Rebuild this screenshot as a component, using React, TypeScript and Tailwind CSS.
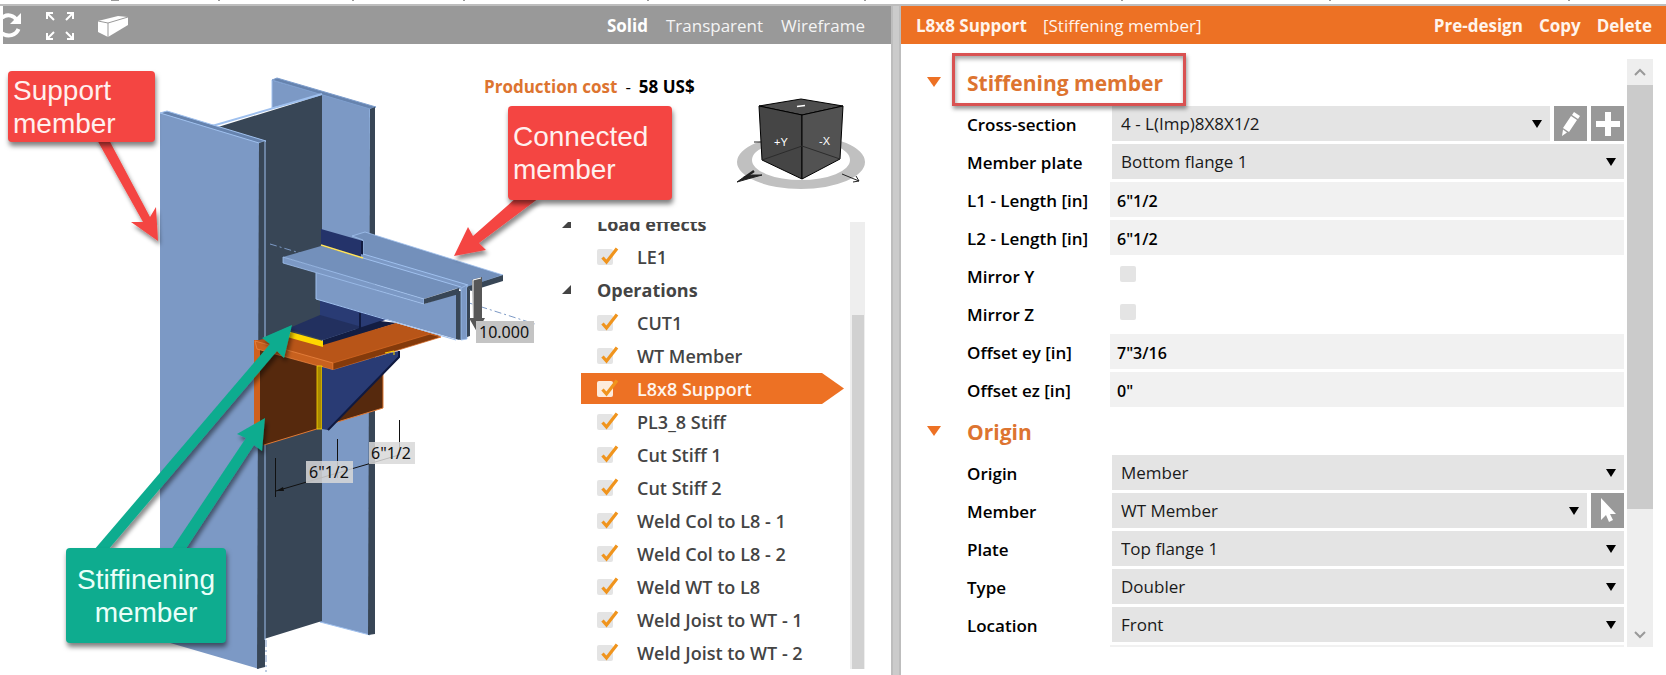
import { useState } from 'react';
import type { ReactNode } from 'react';

const VIEW_MODES = ['Solid', 'Transparent', 'Wireframe'];

const OPERATIONS = [
  'CUT1',
  'WT Member',
  'L8x8 Support',
  'PL3_8 Stiff',
  'Cut Stiff 1',
  'Cut Stiff 2',
  'Weld Col to L8 - 1',
  'Weld Col to L8 - 2',
  'Weld WT to L8',
  'Weld Joist to WT - 1',
  'Weld Joist to WT - 2',
];

function RotateIcon() {
  return (
    <svg width="20" height="28" viewBox="0 0 20 28" fill="none" aria-hidden="true">
      <path d="M-1 5.5C5 1.500 11 3.500 14 8.500M15.500 17C13 23.500 5 25.500 -1 21.500" stroke="#fff" strokeWidth="4" />
      <path d="M18 1v11H7z" fill="#fff" />
    </svg>
  );
}

function ExpandIcon() {
  return (
    <svg width="30" height="30" viewBox="0 0 30 30" fill="none" stroke="#fff" strokeWidth="2" aria-hidden="true">
      <path d="M2 8V2h6M2 2l7 7M22 2h6v6M28 2l-7 7M2 22v6h6M2 28l7-7M28 22v6h-6M28 28l-7-7" />
    </svg>
  );
}

function BeamIcon() {
  return (
    <svg width="30" height="21" viewBox="0 0 30 21" aria-hidden="true">
      <path d="M0 5 20 0l10 1v8L10 21 0 16z" fill="#fff" />
      <path d="M0 5l10 2 20-6M10 7v14" stroke="#999" fill="none" />
    </svg>
  );
}

function Caret() {
  return (
    <svg className="pointer-events-none absolute top-1/2 right-2 -translate-y-1/2" width="10" height="8" viewBox="0 0 10 8" aria-hidden="true">
      <path d="M0 0h10L5 8z" />
    </svg>
  );
}

function Tick() {
  return (
    <svg className="pointer-events-none absolute -top-0.5 left-1" width="18" height="18" viewBox="0 0 18 18" fill="none" aria-hidden="true">
      <path d="M1.500 10.500 5.500 15 16 1.500" stroke="#f0941d" strokeWidth="3.200" />
    </svg>
  );
}

function Scene() {
  return (
    <svg className="absolute top-0 left-0" width="557" height="631" viewBox="3 44 557 631" role="img" aria-label="Steel connection model">
      <defs>
        <filter id="arrow-shadow" x="-20%" y="-20%" width="140%" height="140%">
          <feDropShadow dx="2" dy="4" stdDeviation="2" floodOpacity="0.45" />
        </filter>
      </defs>

      {/* column */}
      <g strokeWidth="1">
        <path d="M272 80 370 108V635L320 622V96L272 108z" fill="#7c99c5" stroke="#9fc0ee" />
        <path d="M272 80 277 78 376 107 370 109z" fill="#6683ae" stroke="#7f9fce" />
        <path d="M370 109 375 107V634L368 635z" fill="#384656" />
        <path d="M218 127 322 95V621L264 639V141z" fill="#384656" />
        <path d="M212 126 322 94" stroke="#9fc0ee" strokeWidth="2" />
        <path d="M160 113 259 142V669L160 640z" fill="#7c99c5" />
        <path d="M160 113 167 111 266 141 259 143z" fill="#6683ae" stroke="#9fc0ee" />
        <path d="M259 143 265 141V667L257 669z" fill="#384656" />
        <path d="M265 141V640" stroke="#9fc0ee" />
      </g>
      <path d="M270 244 300 253M466 302 535 324M266 640V672" stroke="#7c99c5" strokeDasharray="7 3 2 3" />

      {/* plates under the flange */}
      <path d="M320 300 390 318 361 330 320 317z" fill="#293b74" />
      <path d="M287 329 320 315 362 327 323 340z" fill="#22305f" />
      <path d="M323 340 380 321 397 323 323 346z" fill="#131d42" />

      {/* angle support */}
      <path d="M260 349 320 364V428L264 445 260 443z" fill="#56290d" />
      <path d="M264 445 320 428" stroke="#e07a35" />
      <path d="M383 370V408L334 423z" fill="#56290d" stroke="#e07a35" />
      <path d="M254 340H260V424H254z" fill="#d0601c" />
      <path d="M255 341 289 333 323 345 396 323 441 336 333 364z" fill="#b85518" />
      <path d="M255 341 333 363V370L257 349z" fill="#c8611f" stroke="#f08a45" strokeWidth="0.700" />
      <path d="M333 363 430 334 441 337 333 370z" fill="#843a0b" stroke="#d86a24" strokeWidth="0.700" />
      <path d="M317 366H322V429H317z" fill="#a98a00" stroke="#ffd800" strokeWidth="0.800" />
      <path d="M322 367 333 370 390 353 399 351V357L328 430 322 429z" fill="#293b74" />
      <path d="M399 351V357L328 430" stroke="#0f1940" strokeWidth="2" fill="none" />
      <path d="M385 353 394 351V355" stroke="#ffd800" fill="none" />
      <path d="M287 331 323 341V347L287 337z" fill="#ffd800" />

      {/* connected beam */}
      <path d="M321 229 363 241V259L321 246z" fill="#24336a" />
      <path d="M352 236 365 232 503 275 468 287 363 256V240z" fill="#7390bb" stroke="#9fc0ee" strokeWidth="0.800" />
      <path d="M362 241V258" stroke="#111b40" strokeWidth="2" />
      <path d="M503 275V281L471 291 466 287z" fill="#384656" />
      <path d="M361 254 470 285 462 290 361 262z" fill="#7c99c5" />
      <path d="M283 257 321 246 461 287 424 299z" fill="#7390bb" />
      <path d="M363 254 468 285M363 258 461 287" stroke="#9fc0ee" />
      <path d="M316 272 424 304 459 292V340L316 299z" fill="#7c99c5" />
      <path d="M283 257 424 299V304L283 263z" fill="#7c99c5" stroke="#9fc0ee" strokeWidth="0.800" />
      <path d="M424 299 459 288V294L424 304z" fill="#384656" />
      <path d="M456 291H461V340L456 339z" fill="#384656" />
      <path d="M461 288 467 285V339L461 340z" fill="#7c99c5" stroke="#9fc0ee" strokeWidth="0.800" />
      <path d="M467 287 470 290V336L467 337z" fill="#384656" />
      <path d="M321 245 363 258" stroke="#ffe45c" strokeWidth="1.500" />
      <path d="M316 273V299L456 340" stroke="#9fc0ee" fill="none" />
      <path d="M360 313V329" stroke="#111b40" strokeWidth="2" />

      {/* load arrow */}
      <path d="M472 280 482 277V318H485L477 332 469 318H473z" fill="#575757" />
      <path d="M473 318V280L481 278" stroke="#fff" fill="none" />

      {/* dimensions */}
      <path d="M275.500 458V497M337.500 439V478M399.500 420V455M276 491 399 455" stroke="#111" />
      <path d="M276 491 283 487 284 491z" fill="#111" />
      <g fill="#d8d8d8" fillOpacity="0.850">
        <path d="M476 321H534V343H476z" fill="#c4c4c4" fillOpacity="1" />
        <path d="M306 461H353V483H306z" />
        <path d="M369 442H415V464H369z" />
      </g>
      <g className="font-['Noto_Sans',sans-serif] text-base" fill="#111">
        <text x="479" y="338">10.000</text>
        <text x="309" y="478">6"1/2</text>
        <text x="371" y="459">6"1/2</text>
      </g>

      {/* callout pointers */}
      <g filter="url(#arrow-shadow)">
        <path d="M96 138H108L150 217 156 207 158 241 131 222 143 222z" fill="#f44542" />
        <path d="M516 198H539L479 243 486 250 454 256 468 227 473 236z" fill="#f44542" />
        <path d="M94 550H108L277 351 284 358 292 325 262 338 270 344z" fill="#0eac8f" />
        <path d="M171 550H185L254 445 262 451 265 418 237 434 246 438z" fill="#0eac8f" />
      </g>
    </svg>
  );
}

function Callout({ className, children }: { className: string; children: ReactNode }) {
  return (
    <div className={`absolute flex items-center rounded-sm px-[5px] font-['Liberation_Sans',sans-serif] text-[28px] leading-[33px] shadow-[1px_4px_5px_rgba(0,0,0,0.5)] ${className}`}>
      {children}
    </div>
  );
}

function ViewCube() {
  return (
    <svg width="134" height="98" viewBox="734 96 134 98" role="img" aria-label="View cube">
      <path d="M737 162a64 27 0 1 0 128 0a64 27 0 1 0-128 0zM752 160a49 20 0 1 1 98 0a49 20 0 1 1-98 0z" fill="#c0c0c0" fillRule="evenodd" />
      <g stroke="#000" strokeLinejoin="round">
        <path d="M759 106 801 99 843 106 802 115z" fill="#4d4d4d" />
        <path d="M759 106 802 115V179L762 160z" fill="#454545" />
        <path d="M843 106 802 115V179L840 159z" fill="#525252" />
        <path d="M762 160 802 146 840 159" stroke="#2c2c2c" fill="none" />
      </g>
      <path d="M797 106.500 805 105.500" stroke="#fff" strokeWidth="1.500" />
      <g className="font-['Liberation_Sans',sans-serif] text-[11px]" fill="#fff">
        <text x="774" y="146">+Y</text>
        <text x="819" y="145">-X</text>
      </g>
      <path d="M737 182 744 177 752 175 762 175 751 178z" fill="#222" stroke="#222" />
      <path d="M744 178 754 171" stroke="#222" strokeWidth="2.500" />
      <path d="M754 142H761M842 174 859 181M853 182 859 181 856 176" stroke="#222" fill="none" />
    </svg>
  );
}

function TreeGroup({ label, children }: { label: string; children: ReactNode }) {
  return (
    <li>
      <div className="flex h-[33px] items-center">
        <svg className="ml-[22px]" width="9" height="9" viewBox="0 0 9 9" aria-hidden="true">
          <path d="M9 0v9H0z" fill="#444" />
        </svg>
        <span className="ml-[26px] text-lg font-bold">{label}</span>
      </div>
      <ul>{children}</ul>
    </li>
  );
}

function TreeItem({ label, active, onSelect }: { label: string; active?: boolean; onSelect?: () => void }) {
  const [checked, setChecked] = useState(true);
  return (
    <li className="flex h-[33px] items-center pl-[41px]">
      <div
        className={`flex h-[31px] w-[263px] items-center pl-4 ${
          active ? 'bg-[#ed7124] text-[#fff4ec] [clip-path:polygon(0_0,241px_0,100%_50%,241px_100%,0_100%)]' : ''
        }`}
      >
        <span className="relative flex">
          <input
            type="checkbox"
            aria-label={label}
            checked={checked}
            onChange={e => setChecked(e.target.checked)}
            className={`size-4 appearance-none rounded-xs ${active ? 'bg-[#fdebdc]' : 'bg-[#e4e4e4]'}`}
          />
          {checked && <Tick />}
        </span>
        <button type="button" onClick={onSelect} className="ml-6 text-lg font-semibold whitespace-nowrap">
          {label}
        </button>
      </div>
    </li>
  );
}

function Field({ id, label, children }: { id: string; label: string; children: ReactNode }) {
  return (
    <div className="flex h-[35px] items-center">
      <label htmlFor={id} className="w-[143px] shrink-0 pt-0.5 font-semibold whitespace-nowrap">
        {label}
      </label>
      {children}
    </div>
  );
}

function SelectField({ id, label, options, children }: { id: string; label: string; options: string[]; children?: ReactNode }) {
  return (
    <Field id={id} label={label}>
      <div className="relative ml-0.5 h-full min-w-0 flex-1">
        <select id={id} className="h-full w-full appearance-none bg-[#e4e4e4] pr-8 pl-[9px] text-[#1a1a1a]">
          {options.map(o => (
            <option key={o}>{o}</option>
          ))}
        </select>
        <Caret />
      </div>
      {children}
    </Field>
  );
}

function TextField({ id, label, value }: { id: string; label: string; value: string }) {
  return (
    <Field id={id} label={label}>
      <input id={id} type="text" defaultValue={value} className="h-full min-w-0 flex-1 bg-[#f1f1f1] px-[7px] pt-0.5 text-base font-semibold" />
    </Field>
  );
}

function CheckField({ id, label }: { id: string; label: string }) {
  return (
    <Field id={id} label={label}>
      <input id={id} type="checkbox" className="mb-1 ml-2.5 size-4 appearance-none rounded-xs bg-[#e4e4e4] checked:bg-[#ed7124]" />
    </Field>
  );
}

function IconButton({ label, children }: { label: string; children: ReactNode }) {
  return (
    <button type="button" aria-label={label} className="ml-1 flex h-full w-[33px] shrink-0 items-center justify-center bg-[#999]">
      {children}
    </button>
  );
}

function SectionTitle({ children }: { children: ReactNode }) {
  return (
    <h2 className="flex h-[45px] items-center pb-0.5 text-[21px] font-bold text-[#dd7430]">
      <button type="button" aria-label="Collapse section" className="w-10 shrink-0 pb-0.5">
        <svg width="14" height="10" viewBox="0 0 14 10" aria-hidden="true">
          <path d="M0 0h14L7 10z" fill="#ed7124" />
        </svg>
      </button>
      {children}
    </h2>
  );
}

function ModelPanel() {
  const [mode, setMode] = useState('Solid');
  const [selected, setSelected] = useState('L8x8 Support');

  return (
    <section className="flex min-w-0 flex-[888] flex-col">
      <header className="flex h-[38px] shrink-0 items-center bg-[#999] pt-0.5 text-[#f4f4f4]">
        <button type="button" aria-label="Rotate"><RotateIcon /></button>
        <button type="button" aria-label="Zoom to fit" className="ml-[22px]"><ExpandIcon /></button>
        <button type="button" aria-label="Solid view" className="ml-[23px]"><BeamIcon /></button>
        <nav className="mr-[26px] ml-auto flex gap-[18px]">
          {VIEW_MODES.map(m => (
            <button key={m} type="button" onClick={() => setMode(m)} className={m === mode ? 'font-bold text-white' : ''}>
              {m}
            </button>
          ))}
        </nav>
      </header>

      <div className="relative flex flex-1 justify-end overflow-hidden">
        <Scene />
        <Callout className="top-[27px] left-[5px] h-[71px] w-[147px] bg-[#f44542] text-[#fff0ee]">
          Support<br />member
        </Callout>
        <Callout className="top-[62px] left-[505px] h-[94px] w-[164px] bg-[#f44542] text-[#fff0ee]">
          Connected<br />member
        </Callout>
        <Callout className="top-[504px] left-[63px] h-[95px] w-[160px] justify-center bg-[#0eac8f] text-center text-[#eafff9]">
          Stiffinening<br />member
        </Callout>

        <div className="flex w-[407px] flex-col">
          <div className="flex h-[178px] shrink-0 items-start justify-between pr-[23px]">
            <p className="pt-[31px] font-bold">
              <span className="text-[#dd7430]">Production cost</span>
              <span className="mx-2 font-normal">-</span>
              58 US$
            </p>
            <div className="pt-[52px]"><ViewCube /></div>
          </div>
          <div className="ml-auto flex h-[447px] w-[351px] justify-between overflow-hidden pr-[26px] text-[#444]">
            <ul className="-mt-[15px]">
              <TreeGroup label="Load effects">
                <TreeItem label="LE1" />
              </TreeGroup>
              <TreeGroup label="Operations">
                {OPERATIONS.map(op => (
                  <TreeItem key={op} label={op} active={op === selected} onSelect={() => setSelected(op)} />
                ))}
              </TreeGroup>
            </ul>
            <div className="w-[15px] shrink-0 bg-[#eee] pt-[93px]">
              <div className="mx-auto h-full w-3 bg-[#d1d1d1]" />
            </div>
          </div>
        </div>
      </div>
    </section>
  );
}

function PropertyPanel() {
  return (
    <section className="flex min-w-0 flex-[765] flex-col">
      <header className="flex h-[38px] shrink-0 items-center bg-[#ed7124] pt-0.5 pr-3.5 pl-[15px] font-bold text-[#fff4ec]">
        <h1>L8x8 Support</h1>
        <span className="ml-4 font-normal">[Stiffening member]</span>
        <div className="ml-auto flex gap-4">
          <button type="button">Pre-design</button>
          <button type="button">Copy</button>
          <button type="button">Delete</button>
        </div>
      </header>

      <div className="relative flex flex-1 pt-[15px] pr-[13px] pb-7 pl-[26px]">
        <div className="pointer-events-none absolute top-[9px] left-[51px] z-10 h-[53px] w-[234px] border-3 border-[#d95252] shadow-[1px_3px_4px_rgba(0,0,0,0.4),inset_1px_3px_4px_rgba(0,0,0,0.35)]" />
        <form className="h-[588px] min-w-0 flex-1 overflow-hidden pt-0.5">
          <SectionTitle>Stiffening member</SectionTitle>
          <div className="flex flex-col gap-[3px] pl-10">
            <SelectField id="cross-section" label="Cross-section" options={['4 - L(Imp)8X8X1/2']}>
              <IconButton label="Edit cross-section">
                <svg width="18" height="24" viewBox="0 0 18 24" fill="#fff" aria-hidden="true">
                  <path d="M12 0 18 4 16 7 10 3zM9 4 15 8 7 20 1 16zM1 17.500 5 20.500 0 24z" />
                </svg>
              </IconButton>
              <IconButton label="Add cross-section">
                <svg width="24" height="24" viewBox="0 0 24 24" fill="#fff" aria-hidden="true">
                  <path d="M9 0h6v9h9v6h-9v9H9v-9H0V9h9z" />
                </svg>
              </IconButton>
            </SelectField>
            <SelectField id="member-plate" label="Member plate" options={['Bottom flange 1', 'Top flange 1']} />
            <TextField id="l1" label="L1 - Length [in]" value={'6"1/2'} />
            <TextField id="l2" label="L2 - Length [in]" value={'6"1/2'} />
            <CheckField id="mirror-y" label="Mirror Y" />
            <CheckField id="mirror-z" label="Mirror Z" />
            <TextField id="ey" label="Offset ey [in]" value={'7"3/16'} />
            <TextField id="ez" label="Offset ez [in]" value={'0"'} />
          </div>
          <div className="h-[3px]" />
          <SectionTitle>Origin</SectionTitle>
          <div className="flex flex-col gap-[3px] pl-10">
            <SelectField id="origin" label="Origin" options={['Member']} />
            <SelectField id="member" label="Member" options={['WT Member']}>
              <IconButton label="Pick member">
                <svg width="16" height="25" viewBox="0 0 16 25" fill="#fff" aria-hidden="true">
                  <path d="M1 0v22l5-5 3 7 4-2-3-6h6z" />
                </svg>
              </IconButton>
            </SelectField>
            <SelectField id="plate" label="Plate" options={['Top flange 1', 'Bottom flange 1']} />
            <SelectField id="type" label="Type" options={['Doubler']} />
            <SelectField id="location" label="Location" options={['Front', 'Back']} />
            <TextField id="gap" label="" value="" />
          </div>
        </form>

        <div className="ml-[3px] flex h-[588px] w-[26px] shrink-0 flex-col items-center bg-[#eee]">
          <button type="button" aria-label="Scroll up" className="flex h-[26px] shrink-0 items-center justify-center">
            <svg width="12" height="8" viewBox="0 0 12 8" fill="none" stroke="#999" strokeWidth="2" aria-hidden="true">
              <path d="M1 7l5-5 5 5" />
            </svg>
          </button>
          <div className="h-[424px] w-full bg-[#cbcbcb]" />
          <button type="button" aria-label="Scroll down" className="mt-auto flex h-6 shrink-0 items-center justify-center">
            <svg width="12" height="8" viewBox="0 0 12 8" fill="none" stroke="#999" strokeWidth="2" aria-hidden="true">
              <path d="M1 1l5 5 5-5" />
            </svg>
          </button>
        </div>
      </div>
    </section>
  );
}

export default function App() {
  return (
    <div className="flex min-h-screen flex-col bg-white font-['Open_Sans','Noto_Sans',sans-serif] text-[17px] leading-6 text-black">
      <svg className="h-1 shrink-0" width="1666" height="4" aria-hidden="true">
        <path d="M111 0h8M218 0h2M352 0h2M463 0h2M647 0h2M864 0h2M1121 0h2M1329 0h2M1568 0h2" stroke="#999" strokeWidth="2" />
      </svg>
      <main className="flex flex-1 border-t-2 border-[#bdbdbd] pl-[3px]">
        <ModelPanel />
        <div className="w-2.5 shrink-0 border-x-2 border-[#bdbdbd] bg-[#cbcbcb]" />
        <PropertyPanel />
      </main>
    </div>
  );
}
